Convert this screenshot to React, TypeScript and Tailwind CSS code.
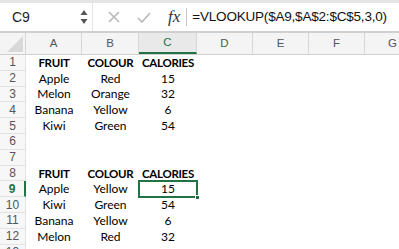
const cols = [
  { key: 'A', w: 'w-[56px]' },
  { key: 'B', w: 'w-[57px]' },
  { key: 'C', w: 'w-[58px]' },
  { key: 'D', w: 'w-[56px]' },
  { key: 'E', w: 'w-[56px]' },
  { key: 'F', w: 'w-[56px]' },
  { key: 'G', w: 'w-[56px]' },
];

const rows: { n: number; cells: string[]; bold?: boolean }[] = [
  { n: 1, cells: ['FRUIT', 'COLOUR', 'CALORIES'], bold: true },
  { n: 2, cells: ['Apple', 'Red', '15'] },
  { n: 3, cells: ['Melon', 'Orange', '32'] },
  { n: 4, cells: ['Banana', 'Yellow', '6'] },
  { n: 5, cells: ['Kiwi', 'Green', '54'] },
  { n: 6, cells: [] },
  { n: 7, cells: [] },
  { n: 8, cells: ['FRUIT', 'COLOUR', 'CALORIES'], bold: true },
  { n: 9, cells: ['Apple', 'Yellow', '15'] },
  { n: 10, cells: ['Kiwi', 'Green', '54'] },
  { n: 11, cells: ['Banana', 'Yellow', '6'] },
  { n: 12, cells: ['Melon', 'Red', '32'] },
  { n: 13, cells: [] },
];

function Toolbar() {
  return (
    <div className="flex h-[31px] gap-px bg-[#e4e4e4] pt-[3px]" style={{ fontFamily: '"Liberation Sans", Arial, sans-serif' }}>
      <div className="flex w-[92px] items-center justify-between bg-white pl-[12px] pr-[4px]">
        <span className="text-[14px] text-[#1d1d1d]">C9</span>
        <svg width="8" height="16" viewBox="0 0 8 16">
          <path d="M4 1 L7.5 6 L0.5 6 Z" fill="#555" />
          <path d="M4 15 L7.5 10 L0.5 10 Z" fill="#555" />
        </svg>
      </div>
      <div className="flex flex-1 items-center bg-white">
        <svg width="12" height="12" viewBox="0 0 12 12" className="ml-[15px]">
          <path d="M1 1 L11 11 M11 1 L1 11" stroke="#b8b8b8" strokeWidth="1.6" />
        </svg>
        <svg width="14" height="11" viewBox="0 0 14 11" className="ml-[17px]">
          <path d="M1 6 L5 10 L13 1" stroke="#b8b8b8" strokeWidth="1.6" fill="none" />
        </svg>
        <span className="ml-[17px] text-[17px] italic text-[#333]" style={{ fontFamily: '"Liberation Serif", serif' }}>
          fx
        </span>
        <div className="ml-[6px] h-[18px] w-px bg-[#c8c8c8]" />
        <span className="ml-[5px] text-[13.5px] tracking-[-0.2px] text-[#111]">=VLOOKUP($A9,$A$2:$C$5,3,0)</span>
      </div>
    </div>
  );
}

function HeaderRow() {
  return (
    <div className="flex h-[24px] border-t-2 border-b border-[#cfcfcf] bg-[#f4f4f4]" style={{ fontFamily: '"Liberation Sans", Arial, sans-serif' }}>
      <div className="relative w-[26px] shrink-0 border-r border-[#d6d6d6]">
        <svg width="16" height="16" viewBox="0 0 16 16" className="absolute right-[2px] bottom-[2px]">
          <path d="M16 0 L16 16 L0 16 Z" fill="#d9d9d9" />
        </svg>
      </div>
      {cols.map((c) => (
        <div
          key={c.key}
          className={`${c.w} flex shrink-0 items-center justify-center border-r border-[#d6d6d6] text-[11.5px] ${
            c.key === 'C' ? 'border-b-2 border-b-[#217346] bg-[#e9e9e9] text-[#217346]' : 'text-[#555]'
          }`}
        >
          {c.key}
        </div>
      ))}
    </div>
  );
}

function Row({ n, cells, bold }: { n: number; cells: string[]; bold?: boolean }) {
  const active = n === 9;
  return (
    <div className="flex h-[15.8px]">
      <div
        className={`flex w-[26px] shrink-0 items-center justify-center border-r border-b border-[#e2e2e2] bg-[#f7f7f7] text-[12px] ${
          active ? 'border-r-2 border-r-[#217346] font-bold text-[#217346]' : 'text-[#555]'
        }`}
        style={{ fontFamily: '"Liberation Sans", Arial, sans-serif' }}
      >
        {n}
      </div>
      {cols.map((c, i) => (
        <div
          key={c.key}
          className={`${c.w} relative flex shrink-0 items-center justify-center leading-none text-black ${
            bold ? 'text-[11.5px] font-bold tracking-[-0.3px]' : 'text-[12px]'
          }`}
        >
          {cells[i] ?? ''}
          {active && c.key === 'C' && (
            <>
              <div className="absolute -top-[1px] -left-[1px] -right-[1px] -bottom-[1px] border-2 border-[#217346]" />
              <div className="absolute -right-[3px] -bottom-[3px] h-[5px] w-[5px] border border-white bg-[#217346]" />
            </>
          )}
        </div>
      ))}
    </div>
  );
}

export default function App() {
  return (
    <div className="h-[249px] w-[399px] overflow-hidden bg-white" style={{ fontFamily: 'Lato, "Open Sans", sans-serif' }}>
      <Toolbar />
      <HeaderRow />
      {rows.map((r) => (
        <Row key={r.n} {...r} />
      ))}
    </div>
  );
}
